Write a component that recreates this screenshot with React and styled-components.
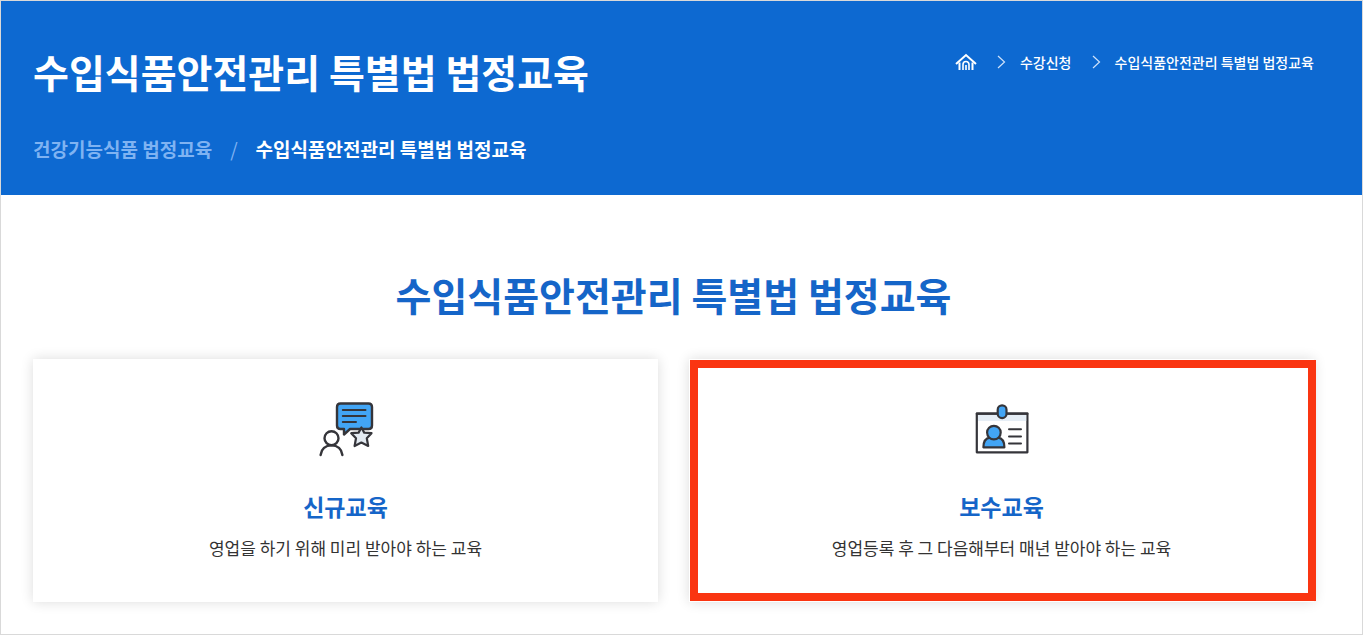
import React from 'react';
import styled, {createGlobalStyle} from 'styled-components';

const GlobalStyle = createGlobalStyle`
  * {
    box-sizing: border-box;
  }
  body {
    margin: 0;
    background: #fff;
    font-family: 'Noto Sans CJK KR', 'Noto Sans', sans-serif;
    color: #333;
  }
  h1, h2, h3, p, ol, ul {
    margin: 0;
    padding: 0;
  }
  a {
    color: inherit;
    text-decoration: none;
  }
`;

const Page = styled.div`
  border: 1px solid #d9d9d9;
`;

const Hero = styled.header`
  display: flex;
  flex-wrap: wrap;
  justify-content: space-between;
  align-items: flex-start;
  padding: 41px 48px 32px 32px;
  background: #0d69d1;
  color: #fff;
`;

const HeroTitle = styled.h1`
  font-size: 39px;
  line-height: 58px;
  font-weight: 700;
`;

const Tabs = styled.nav`
  display: flex;
  align-items: center;
  gap: 18px;
  margin-top: 35px;
  font-size: 19px;
  line-height: 28px;
  font-weight: 700;
`;

const Tab = styled.a`
  color: ${props => props.$active ? '#fff' : '#7fb3f2'};
`;

const Slash = styled.span`
  color: #7fb3f2;
  font-weight: 400;
`;

const Breadcrumb = styled.ol`
  display: flex;
  align-items: center;
  gap: 20px;
  padding-top: 6px;
  list-style: none;
  font-size: 14px;
  line-height: 28px;
  font-weight: 500;
`;

const Crumb = styled.li`
  display: flex;
  align-items: center;
  gap: 14px;

  a {
    display: flex;
  }
`;

const Content = styled.main`
  padding: 70px 48px 32px 32px;
`;

const SectionTitle = styled.h2`
  margin-bottom: 36px;
  color: #1565c8;
  font-size: 39px;
  line-height: 58px;
  font-weight: 700;
  text-align: center;
`;

const Cards = styled.div`
  display: grid;
  grid-template-columns: 1fr 1fr;
  gap: 31px;
`;

const Card = styled.a`
  position: relative;
  display: flex;
  flex-direction: column;
  align-items: center;
  padding: 41px 20px;
  background: #fff;
  box-shadow: 0 0 12px rgba(0, 0, 0, 0.14);
  text-align: center;
`;

// red frame lying over the card
const Marker = styled.span`
  position: absolute;
  top: 1px;
  right: -2px;
  bottom: 1px;
  left: 1px;
  border: 8px solid #fa3511;
  pointer-events: none;
`;

const CardTitle = styled.h3`
  margin-top: 30px;
  color: #1565c8;
  font-size: 23px;
  line-height: 36px;
  font-weight: 700;
`;

const CardText = styled.p`
  margin-top: 11px;
  font-size: 17px;
  line-height: 26px;
`;

const HomeIcon = () => (
  <svg width="22" height="18" viewBox="0 0 22 18" fill="none" stroke="#fff">
    <path d="M1 11 L11 2 L21 11" strokeWidth="2" />
    <path d="M4.500 9.500 V17 M17.500 9.500 V17" strokeWidth="2" />
    <path d="M8 17 V11.500 A3 3 0 0 1 14 11.500 V17 M11 12 V17" strokeWidth="1.600" />
  </svg>
);

const ChevronIcon = () => (
  <svg width="9" height="14" viewBox="0 0 9 14" fill="none" stroke="#cfe2fa" strokeWidth="1.200">
    <path d="M1 1 L7.500 7 L1 13" />
  </svg>
);

const ConsultIcon = () => (
  <svg width="58" height="58" viewBox="7 10 58 58" fill="none" stroke="#35353a" strokeWidth="2.400" strokeLinecap="round" strokeLinejoin="round">
    <path d="M30.500 13.500 H58.500 Q62 13.500 62 17 V35.500 Q62 39 58.500 39 H40 L34 44.500 V39 H30.500 Q27 39 27 35.500 V17 Q27 13.500 30.500 13.500 Z" fill="#42a5f5" />
    <path d="M32.800 20 H55.500 M32.800 26 H55.500 M32.800 32 H46" strokeWidth="2" />
    <path d="M51.400 37.500 L54.200 42.600 L61.500 43.200 L56.800 48.200 L58.200 56 L51.400 52.600 L44.600 56 L46 48.200 L41.200 43.200 L48.600 42.600 Z" fill="#e3eaf1" strokeWidth="2.200" />
    <circle cx="21.500" cy="48.200" r="7" fill="#fff" />
    <path d="M10.600 65 Q12 55.400 21.500 55.400 Q31 55.400 32.400 65" />
  </svg>
);

const BadgeIcon = () => (
  <svg width="58" height="58" viewBox="12 10 58 58" fill="none" stroke="#35353a" strokeWidth="2.200" strokeLinecap="round" strokeLinejoin="round">
    <rect x="15.800" y="23.700" width="50.600" height="38.600" fill="#fff" />
    <path d="M17 25 H65.200 V31 H17 Z" fill="#e6eef6" stroke="none" />
    <path d="M15.800 23.700 H66.400" />
    <rect x="36.700" y="15.300" width="8.800" height="12.800" rx="4.400" fill="#42a5f5" />
    <path d="M22.400 57.300 Q22.400 48.400 29 47.600 H37 Q43.400 48.400 43.400 57.300 Z" fill="#42a5f5" />
    <circle cx="32.900" cy="42.600" r="6.800" fill="#42a5f5" />
    <path d="M48 39.300 H60 M48 46.500 H60 M48 53.400 H60" strokeWidth="2" />
  </svg>
);

const courses = [
  {name: '신규교육', text: '영업을 하기 위해 미리 받아야 하는 교육', icon: <ConsultIcon />},
  {name: '보수교육', text: '영업등록 후 그 다음해부터 매년 받아야 하는 교육', icon: <BadgeIcon />, marked: true},
];

function App() {
  return (
    <Page>
      <GlobalStyle />
      <Hero>
        <div>
          <HeroTitle>수입식품안전관리 특별법 법정교육</HeroTitle>
          <Tabs>
            <Tab href="#health">건강기능식품 법정교육</Tab>
            <Slash>/</Slash>
            <Tab href="#import" $active>수입식품안전관리 특별법 법정교육</Tab>
          </Tabs>
        </div>
        <Breadcrumb>
          <Crumb><a href="#home" aria-label="홈"><HomeIcon /></a></Crumb>
          <Crumb><ChevronIcon /><a href="#apply">수강신청</a></Crumb>
          <Crumb><ChevronIcon /><a href="#import">수입식품안전관리 특별법 법정교육</a></Crumb>
        </Breadcrumb>
      </Hero>
      <Content>
        <SectionTitle>수입식품안전관리 특별법 법정교육</SectionTitle>
        <Cards>
          {courses.map(course => (
            <Card href="#course" key={course.name}>
              {course.icon}
              <CardTitle>{course.name}</CardTitle>
              <CardText>{course.text}</CardText>
              {course.marked && <Marker />}
            </Card>
          ))}
        </Cards>
      </Content>
    </Page>
  );
}

export default App;
